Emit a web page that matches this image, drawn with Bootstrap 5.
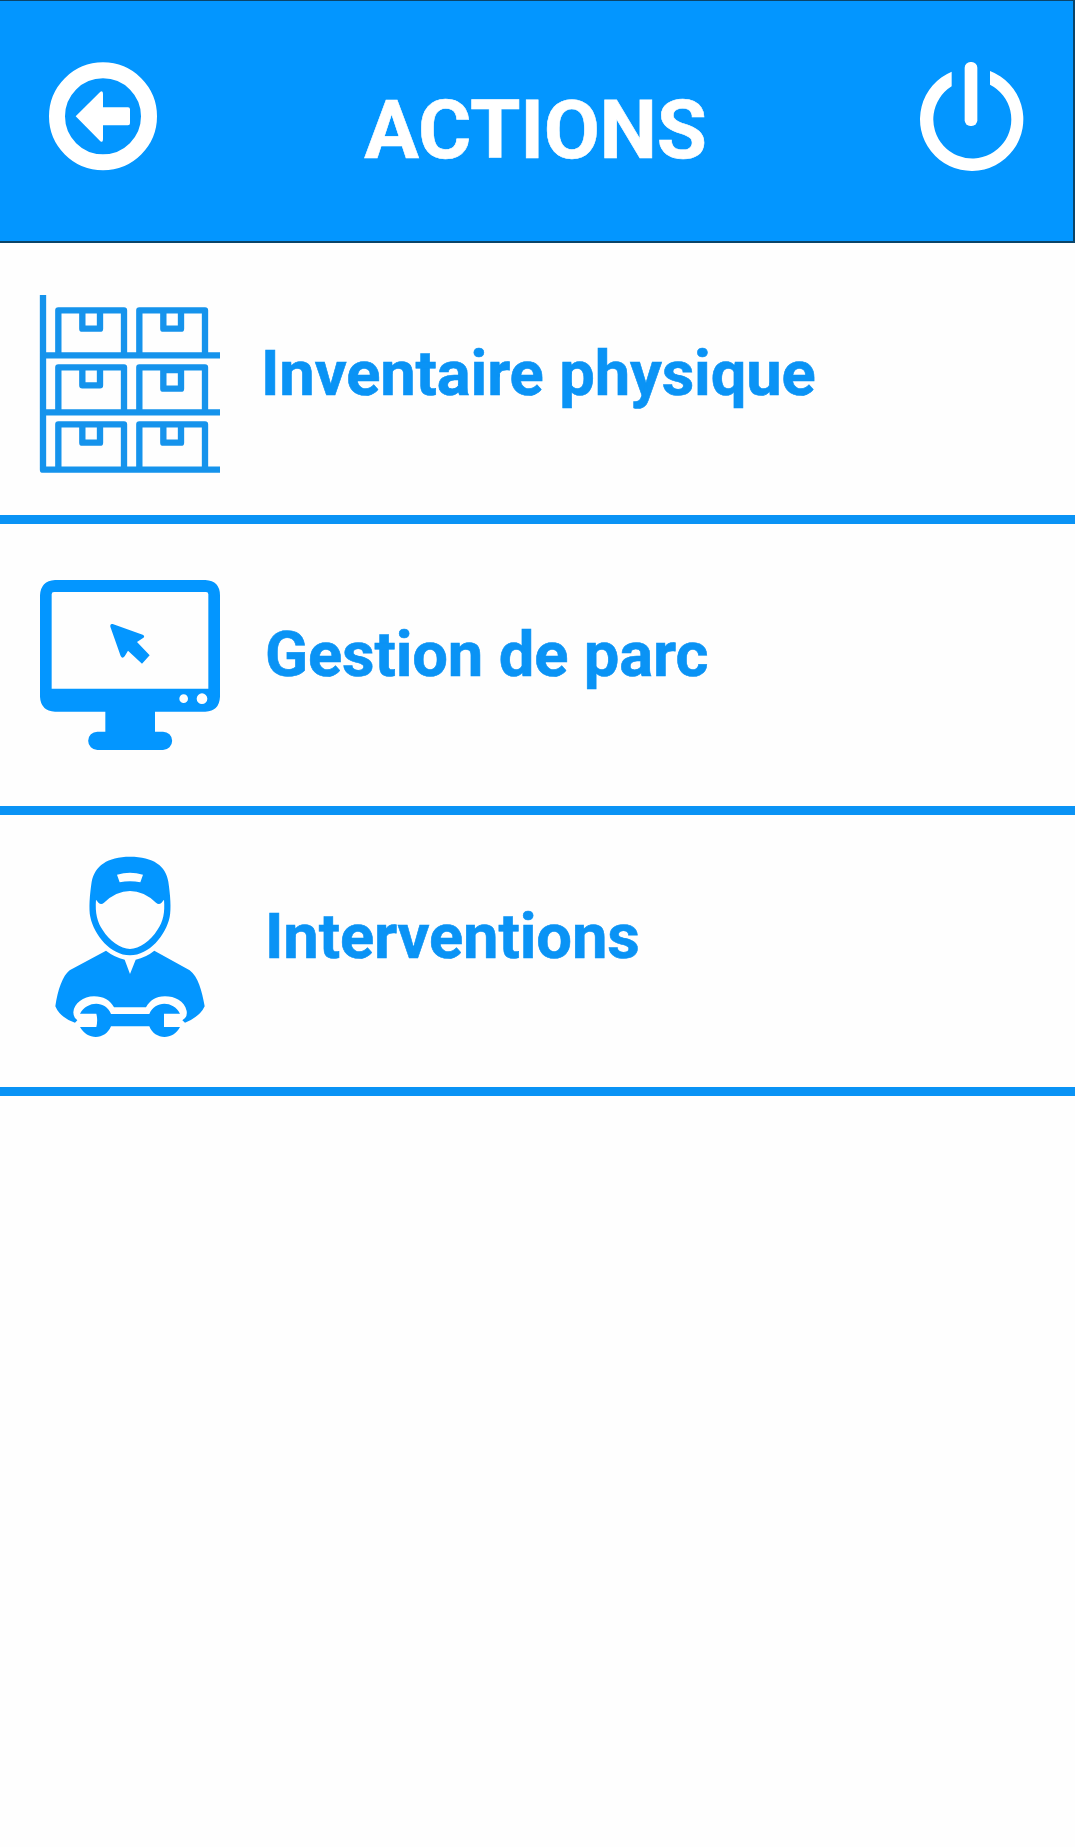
<!DOCTYPE html>
<html lang="fr">
<head>
<meta charset="utf-8">
<meta name="viewport" content="width=device-width, initial-scale=1">
<title>Actions</title>
<link href="https://cdn.jsdelivr.net/npm/bootstrap@5.3.0/dist/css/bootstrap.min.css" rel="stylesheet">
<style>
body{background:#fefefe;font-family:Roboto,"Liberation Sans",sans-serif;overflow-x:hidden}
.topbar{height:243px;background:#0396ff;border:solid #0b4468;border-width:1px 2px 2px 0}
.topbar svg{width:150px;height:140px;fill:#fff;display:block}
.topbar .left-btn{margin:44px 0 0 30px}
.topbar .right-btn{margin:44px 23px 0 0}
.screen-title{font-size:81.5px;line-height:82px;font-weight:700;color:#fff;margin:88px 9px 0 0;white-space:nowrap;letter-spacing:-.3px;-webkit-text-stroke:.6px #fff}
.action-row{border-bottom:9px solid #0a93f5;color:#0a93f5;text-decoration:none;padding-left:20px}
.action-row svg{width:220px;height:210px;fill:#0396ff;flex:none}
.action-label{font-size:63.3px;line-height:64px;font-weight:700;white-space:nowrap;letter-spacing:-.15px;-webkit-text-stroke:.6px #0a93f5}
.row-stock{height:281px;padding-top:37px}
.row-park{height:291px;padding-top:36px}
.row-jobs{height:281px;padding-top:25px}
.row-stock .action-label{margin:61px 0 0 21px}
.row-park .action-label{margin:62px 0 0 25px}
.row-jobs .action-label{margin:64px 0 0 25px}
</style>
<script src="https://cdn.jsdelivr.net/npm/bootstrap@5.3.0/dist/js/bootstrap.bundle.min.js"></script>
</head>
<body>
<header class="topbar d-flex justify-content-between align-items-start">
  <a href="#" class="left-btn" aria-label="Retour"><svg viewBox="0 0 450 420"><circle cx="219" cy="214" r="138" fill="none" stroke="#fff" stroke-width="48"/><path d="M137 214L211 140Q219 135 219 146V187H294Q300 187 300 193V235Q300 241 294 241H219V283Q219 294 211 289Z"/></svg></a>
  <h1 class="screen-title">ACTIONS</h1>
  <a href="#" class="right-btn" aria-label="Quitter"><svg viewBox="0 0 450 420"><rect x="194" y="51" width="38" height="192" rx="17"/><path d="M155 80A155 155 0 1 0 270 78V119A117 117 0 1 1 155 124Z"/></svg></a>
</header>
<main>
  <a href="#" class="action-row row-stock d-flex align-items-start">
    <svg viewBox="0 0 660 630">
      <g fill="none" stroke="#1593ec" stroke-width="19">
        <path d="M69 45V569H600M69 226H600M69 397H600" stroke-linejoin="round"/>
        <g stroke-linejoin="round">
          <path d="M115 226V91H312V226M187 91V146H240V91"/><path d="M358 226V91H555V226M430 91V146H483V91"/>
          <path d="M115 397V262H312V397M187 262V316H240V262"/><path d="M358 397V262H555V397M430 262V326H483V262M430 270H483"/>
          <path d="M115 569V433H312V569M187 433V488H240V433"/><path d="M358 569V433H555V569M430 433V488H483V433"/>
        </g>
      </g>
    </svg>
    <span class="action-label">Inventaire physique</span>
  </a>
  <a href="#" class="action-row row-park d-flex align-items-start">
    <svg viewBox="0 0 660 630">
      <path fill-rule="evenodd" d="M105 60H556Q600 63 600 106V410Q598 453 556 455H405V515H429A27 27 0 0 1 429 570H232A27 27 0 0 1 232 515H256V455H105Q62 452 60 410V106Q62 63 105 60ZM102 96Q95 96 95 103V386H565V103Q565 96 558 96ZM504 416A13 13 0 1 0 478 416A13 13 0 1 0 504 416ZM562 416A16 16 0 1 0 530 416A16 16 0 1 0 562 416Z"/>
      <path d="M278 192L368 224Q377 229 368 235L351 246L389 286L366 311L324 272L314 289Q307 298 302 288L271 200Q270 190 278 192Z"/>
    </svg>
    <span class="action-label">Gestion de parc</span>
  </a>
  <a href="#" class="action-row row-jobs d-flex align-items-start">
    <svg viewBox="0 0 660 630">
      <path fill-rule="evenodd" d="M330 50C400 50 438 78 445 125C451 165 454 205 449 231C438 285 388 346 330 346C272 346 222 285 211 231C206 205 209 165 215 125C224 78 262 50 330 50ZM291 104L299 127Q330 121 361 127L369 104Q330 92 291 104ZM228 179C225 220 232 246 248 270C268 302 302 327 330 327C358 327 392 302 412 270C430 244 435 218 432 179L424 189Q416 195 408 188Q371 153 330 153Q289 153 252 188Q244 195 236 189Z"/>
      <path d="M258 332Q284 352 314 359L330 402L347 359Q378 352 403 332L509 391C534 410 546 452 554 499Q540 530 495 548L487 541Q503 532 500 513C493 482 464 469 435 469C406 469 390 482 378 502H282C270 480 250 469 222 469C190 469 162 490 160 517Q160 533 172 541L165 548Q120 533 106 499C113 450 128 407 149 391Z"/>
      <path d="M180 521C202 482 257 481 273 522H388C405 481 460 482 480 521H432V561H480C460 602 403 600 388 559H273C257 600 202 602 180 561H229Q234 541 229 521Z"/>
    </svg>
    <span class="action-label">Interventions</span>
  </a>
</main>
</body>
</html>
